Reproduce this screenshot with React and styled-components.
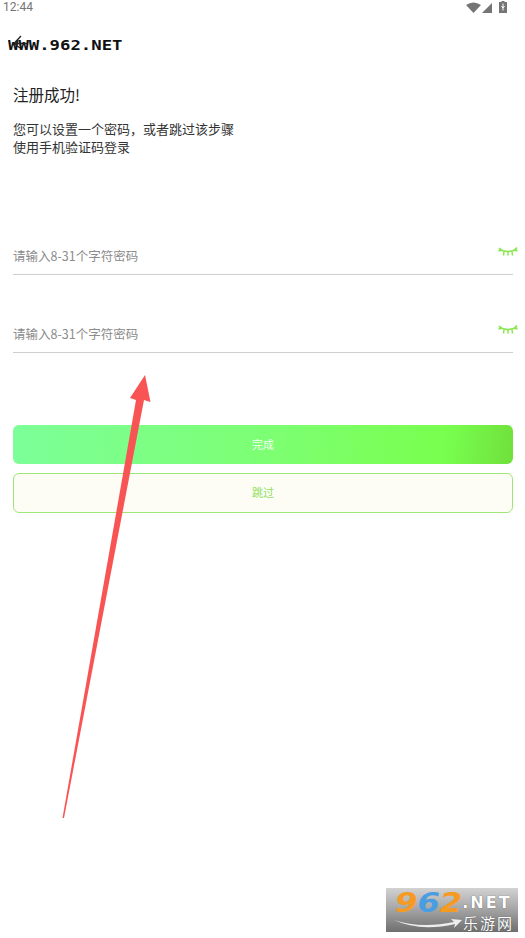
import React from "react";
import styled, { createGlobalStyle } from "styled-components";

const GlobalStyle = createGlobalStyle`
  html, body {
    margin: 0;
    padding: 0;
    background: #fff;
  }
  * {
    box-sizing: border-box;
  }
`;

const Page = styled.div`
  position: relative;
  width: 525px;
  height: 938px;
  overflow: hidden;
  background: #fff;
  font-family: "Noto Sans CJK SC", "Noto Sans", sans-serif;
`;

const StatusBar = styled.div`
  display: flex;
  align-items: center;
  justify-content: space-between;
  height: 14px;
  padding: 0 18px 0 3px;
  font-family: Roboto, sans-serif;
  font-size: 12px;
  color: #757575;
`;

const StatusIcons = styled.div`
  display: flex;
  align-items: center;
  gap: 1px;
`;

const Header = styled.div`
  height: 44px;
  padding: 25px 0 0 8px;
`;

const Content = styled.div`
  padding: 0 12px 0 13px;
`;

const Title = styled.h1`
  margin: 25px 0 0;
  font-size: 15.5px;
  line-height: 22px;
  font-weight: 400;
  color: #222;
`;

const Desc = styled.p`
  margin: 15px 0 0;
  font-size: 13px;
  line-height: 18px;
  color: #333;
`;

const Field = styled.div`
  position: relative;
  height: 40px;
  margin-top: ${(p) => p.$top}px;
  border-bottom: 1.5px solid #cfcfcf;
  display: flex;
  align-items: center;
  padding-top: 2px;
  font-size: 12.5px;
  color: #8c8c8c;
`;

const EyeWrap = styled.div`
  position: absolute;
  right: -5px;
  top: 12px;
  display: flex;
`;

const Button = styled.div`
  display: flex;
  align-items: center;
  justify-content: center;
  height: ${(p) => p.$height}px;
  margin-top: ${(p) => p.$top}px;
  padding-bottom: 2px;
  border-radius: 6px;
  font-size: 11px;
`;

const PrimaryButton = styled(Button)`
  background: linear-gradient(97deg, #7cff98 0%, #7dff74 50%, #78ff4e 86%, #70e03c 100%);
  color: #f2fff0;
`;

const GhostButton = styled(Button)`
  background: #fdfdf5;
  border: 1px solid #9fe678;
  color: #8fe05e;
`;

const Watermark = styled.div`
  font-family: "DejaVu Sans Mono", monospace;
  font-size: 13.5px;
  line-height: 12px;
  font-weight: 700;
  transform: scaleX(1.28);
  transform-origin: left center;
  color: #111;
  white-space: nowrap;
`;

const BackArrow = styled.svg`
  position: absolute;
  left: 12px;
  top: 35px;
`;

const Annotation = styled.svg`
  position: absolute;
  left: 0;
  top: 0;
  pointer-events: none;
`;

const Logo = styled.div`
  position: absolute;
  left: 386px;
  top: 888px;
  width: 132px;
  height: 44px;
  padding: 3px 0 0 9px;
  background: linear-gradient(180deg, #d2d2d2 0%, #a8a8a8 45%, #6f6f6f 100%);
`;

const LogoTop = styled.div`
  display: flex;
  align-items: center;
  height: 24px;
  line-height: 24px;
  font-family: "DejaVu Sans", sans-serif;
  font-weight: 700;
`;

const LogoDigits = styled.div`
  margin-right: 13px;
  font-size: 26px;
  font-style: italic;
  transform: scaleX(1.24);
  transform-origin: left center;
  white-space: nowrap;
`;

const LogoNum = styled.span`
  color: ${(p) => p.$color};
`;

const LogoNet = styled.span`
  font-size: 16px;
  line-height: 20px;
  letter-spacing: 2px;
  color: #fff;
  text-shadow: 0 0 1px #444;
`;

const LogoSub = styled.div`
  margin-left: 68px;
  font-size: 15px;
  line-height: 15px;
  letter-spacing: 2px;
  color: #fff;
  text-shadow: 0 0 1px #444;
  white-space: nowrap;
`;

const LogoSwoosh = styled.svg`
  position: absolute;
  left: 8px;
  top: 30px;
`;

const Eye = () => (
  <svg width="20" height="10" viewBox="0 0 20 10" fill="none" stroke="#88e64e" strokeWidth="1.5">
    <path d="M1 1.5 C6 5.5 14 5.5 19 1.5" />
    <path d="M1 1 L4 3.5 M0.5 4 L3.5 3.2 M6 4.5 L5.5 8.5 M14 4.5 L14.5 8.5 M10 5 L10 8.5 M16 3.5 L19 0.5 M16.5 3.2 L19.5 4" />
  </svg>
);

const PasswordField = ({ top }) => (
  <Field $top={top}>
    请输入8-31个字符密码
    <EyeWrap>
      <Eye />
    </EyeWrap>
  </Field>
);

const App = () => {
  return (
    <Page>
      <GlobalStyle />
      <StatusBar>
        12:44
        <StatusIcons>
          <svg width="15" height="11" viewBox="0 0 15 11">
            <path d="M0 3 Q7.5 -2 15 3 L7.5 11 Z" fill="#757575" />
          </svg>
          <svg width="16" height="11" viewBox="0 0 16 11">
            <path d="M0 11 L10 1 L10 11 Z" fill="#757575" />
          </svg>
          <svg width="8" height="12" viewBox="0 0 8 12">
            <path d="M2.5 0 H5.5 V1 H8 V12 H0 V1 H2.5 Z" fill="#757575" />
            <path d="M4 2.5 V9.5 M2.5 5 L4 7 L5.5 5" stroke="#fff" strokeWidth="1" fill="none" />
          </svg>
        </StatusIcons>
      </StatusBar>

      <Header>
        <Watermark>WWW.962.NET</Watermark>
      </Header>
      <BackArrow width="16" height="14" viewBox="0 0 16 14" fill="none" stroke="#222" strokeWidth="1.3">
        <path d="M9 1 L2 8.5 L8 13 M2 8.5 L15 8.5" />
      </BackArrow>

      <Content>
        <Title>注册成功!</Title>
        <Desc>
          您可以设置一个密码，或者跳过该步骤
          <br />
          使用手机验证码登录
        </Desc>
        <PasswordField top={79} />
        <PasswordField top={38} />
        <PrimaryButton $height={39} $top={72}>完成</PrimaryButton>
        <GhostButton $height={40} $top={9}>跳过</GhostButton>
      </Content>

      <Annotation width="525" height="938" viewBox="0 0 525 938">
        <path d="M145 375 L150.5 402 L144 400 L64 818 L62.5 818 L136 400 L130 398 Z" fill="#f95454" />
      </Annotation>

      <Logo>
        <LogoTop>
          <LogoDigits>
            <LogoNum $color="#f59a23">9</LogoNum>
            <LogoNum $color="#4a9de0">6</LogoNum>
            <LogoNum $color="#f59a23">2</LogoNum>
          </LogoDigits>
          <LogoNet>.NET</LogoNet>
        </LogoTop>
        <LogoSub>乐游网</LogoSub>
        <LogoSwoosh width="68" height="12" viewBox="0 0 68 12">
          <path d="M0 2 Q26 11 60 4 L57 1 L68 2 L60 10 L61 6 Q26 14 0 2 Z" fill="#eee" />
        </LogoSwoosh>
      </Logo>
    </Page>
  );
};

export default App;
